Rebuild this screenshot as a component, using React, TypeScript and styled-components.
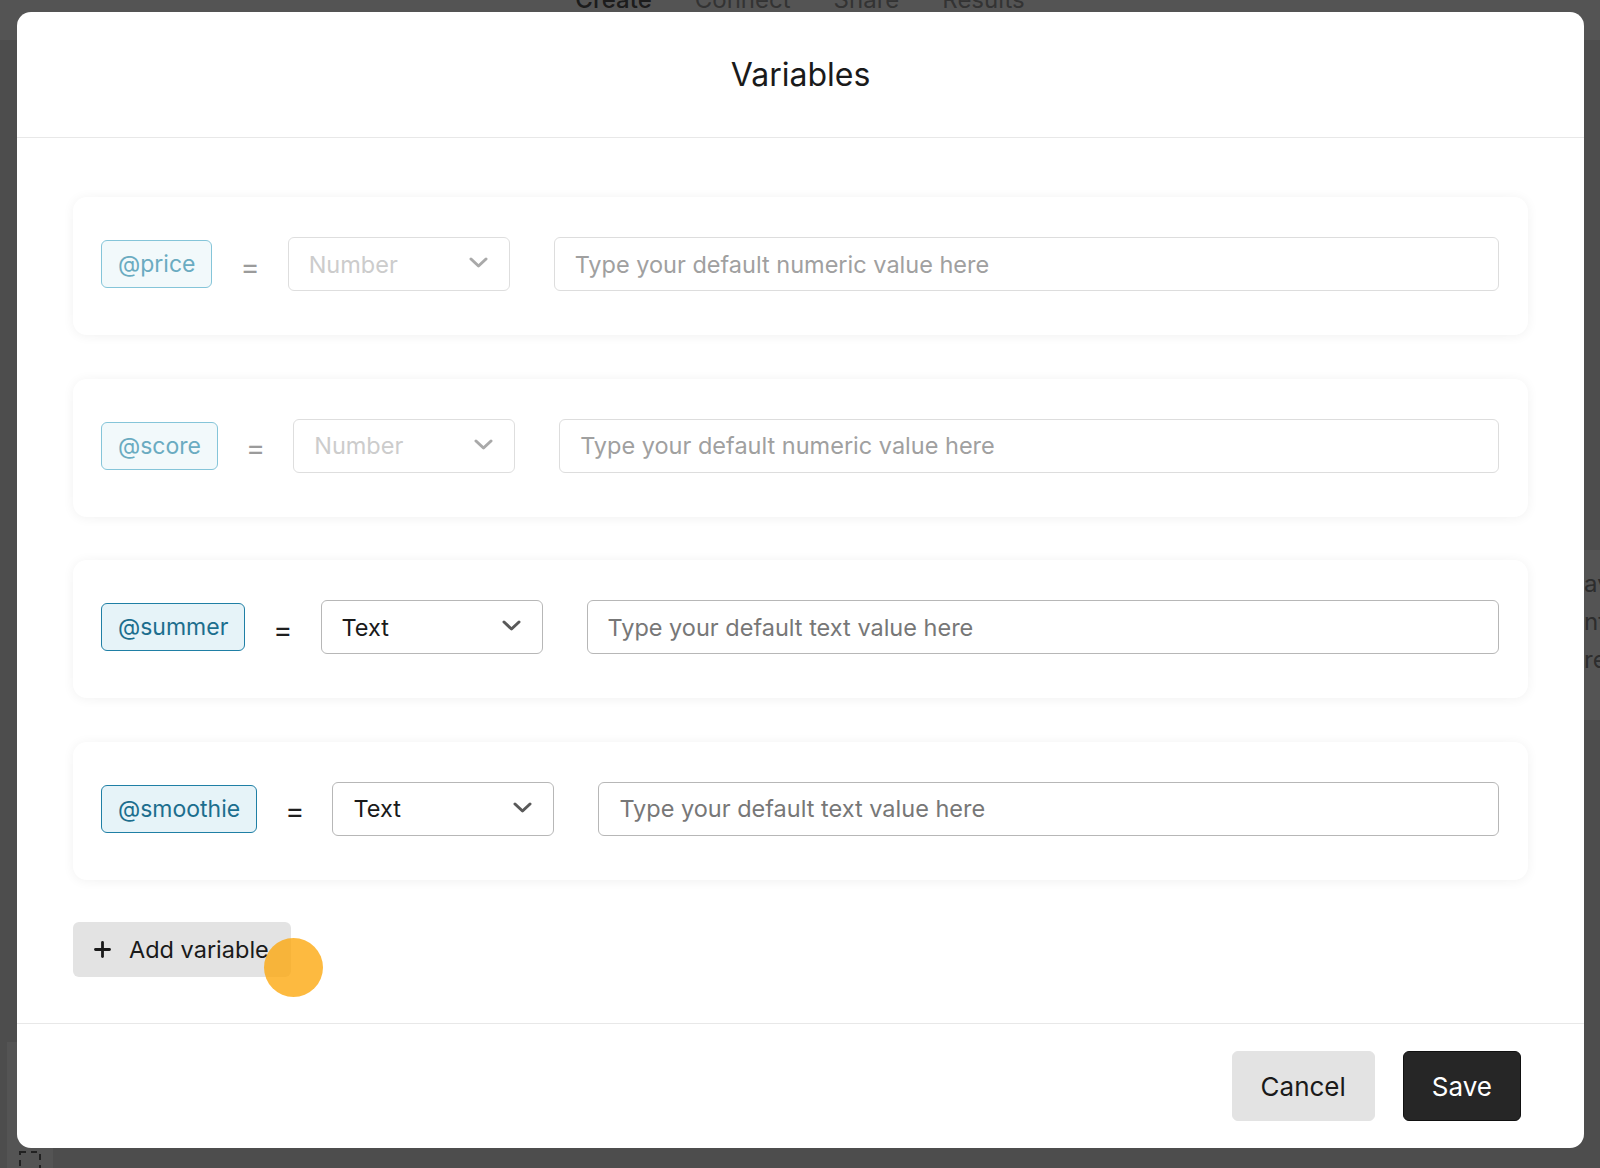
import React from 'react';
import styled, { createGlobalStyle } from 'styled-components';

const GlobalStyle = createGlobalStyle`
  html, body {
    margin: 0;
    padding: 0;
  }
  body {
    font-family: Inter, 'Noto Sans', sans-serif;
    overflow: hidden;
  }
  * {
    box-sizing: border-box;
  }
`;

/* page behind the dialog */

const Page = styled.div`
  position: relative;
  height: 100vh;
  background: #e9e9e9;
  display: flex;
  flex-direction: column;
  overflow: hidden;
`;

const TopNav = styled.nav`
  height: 40px;
  flex-shrink: 0;
  background: #fff;
  display: flex;
  justify-content: center;
  gap: 43px;
  overflow: hidden;
`;

const NavTab = styled.span<{ $active?: boolean }>`
  margin-top: -13px;
  font-size: 24px;
  line-height: 26px;
  color: ${(p) => (p.$active ? '#555' : '#9a9a9a')};
  font-weight: ${(p) => (p.$active ? 500 : 400)};
`;

const Workspace = styled.div`
  flex: 1;
  display: flex;
  justify-content: space-between;
`;

const LeftDock = styled.div`
  align-self: flex-end;
  margin-left: 7px;
  width: 46px;
  height: 126px;
  background: #fff;
  display: flex;
  flex-direction: column;
  justify-content: flex-end;
  padding-left: 12px;
`;

const DockIcon = styled.svg`
  margin-bottom: -5px;
`;

const SidePanel = styled.div`
  margin-top: 510px;
  width: 16px;
  height: 170px;
  padding-top: 15px;
  background: #fff;
  color: #888;
  font-size: 24px;
  line-height: 38px;
  white-space: nowrap;
  overflow: hidden;
`;

/* dialog */

const Overlay = styled.div`
  position: absolute;
  inset: 0;
  background: rgba(0, 0, 0, 0.67);
  display: flex;
  padding: 12px 16px 20px 17px;
`;

const Modal = styled.div`
  flex: 1;
  background: #fff;
  border-radius: 14px;
  display: flex;
  flex-direction: column;
  overflow: hidden;
`;

const ModalHeader = styled.header`
  height: 126px;
  flex-shrink: 0;
  border-bottom: 1px solid #e8e8e8;
  display: flex;
  align-items: center;
  justify-content: center;
`;

const Title = styled.h1`
  margin: 0;
  font-size: 32px;
  font-weight: 400;
  color: #1a1a1a;
`;

const ModalBody = styled.div`
  flex: 1;
  padding: 59px 56px 0;
  display: flex;
  flex-direction: column;
`;

const VariableList = styled.div`
  display: flex;
  flex-direction: column;
  gap: 43.5px;
`;

const VariableCard = styled.div`
  height: 138px;
  padding: 0 29px 4px 28px;
  background: #fff;
  border-radius: 14px;
  box-shadow: 0 1px 12px rgba(0, 0, 0, 0.06);
  display: flex;
  align-items: center;
  gap: 28px;
`;

const VarTag = styled.span<{ $active: boolean }>`
  height: 48px;
  padding: 0 16px;
  display: inline-flex;
  align-items: center;
  border-radius: 6px;
  border: 1.5px solid ${(p) => (p.$active ? '#1f7fa5' : '#85c5d9')};
  background: ${(p) => (p.$active ? '#e6f3f8' : '#f2f9fb')};
  color: ${(p) => (p.$active ? '#1c6e8e' : '#6aabc1')};
  font-size: 23px;
`;

const Equals = styled.span<{ $active: boolean }>`
  font-size: 29px;
  line-height: 1;
  margin-top: 4px;
  color: ${(p) => (p.$active ? '#1f1f1f' : '#9b9b9b')};
`;

const SelectBox = styled.div<{ $active: boolean }>`
  width: 222px;
  height: 54px;
  flex-shrink: 0;
  padding: 0 21px 0 20px;
  display: flex;
  align-items: center;
  justify-content: space-between;
  border-radius: 6px;
  border: 1.5px solid ${(p) => (p.$active ? '#b7b7b7' : '#dedede')};
  color: ${(p) => (p.$active ? '#1a1a1a' : '#cccccc')};
  font-size: 23.5px;

  svg {
    margin-top: -3px;
    stroke: ${(p) => (p.$active ? '#595959' : '#a9a9a9')};
  }
`;

const ValueInput = styled.input<{ $active: boolean }>`
  flex: 1;
  min-width: 0;
  margin-left: 16px;
  height: 54px;
  padding: 0 20px;
  border-radius: 6px;
  border: 1.5px solid ${(p) => (p.$active ? '#b7b7b7' : '#dddddd')};
  background: #fff;
  font-family: inherit;
  font-size: 23.5px;
  outline: none;

  &::placeholder {
    color: ${(p) => (p.$active ? '#777' : '#a0a0a0')};
  }
`;

const AddRow = styled.div`
  position: relative;
  align-self: flex-start;
  margin-top: 42px;
`;

const AddButton = styled.button`
  height: 55px;
  padding: 0 22px 0 21px;
  display: inline-flex;
  align-items: center;
  gap: 18px;
  border: none;
  border-radius: 6px;
  background: #e3e3e3;
  color: #1a1a1a;
  font-family: inherit;
  font-size: 23.5px;
`;

const ClickMarker = styled.span`
  position: absolute;
  left: 191px;
  top: 16px;
  width: 59px;
  height: 59px;
  border-radius: 50%;
  background: rgba(253, 166, 10, 0.78);
  pointer-events: none;
`;

const ModalFooter = styled.footer`
  height: 125px;
  flex-shrink: 0;
  border-top: 1px solid #e8e8e8;
  display: flex;
  align-items: center;
  justify-content: flex-end;
  gap: 28px;
  padding-right: 63px;
`;

const FooterButton = styled.button<{ $primary?: boolean }>`
  height: 70px;
  padding: 0 28px;
  border-radius: 6px;
  border: 1px solid ${(p) => (p.$primary ? '#111' : '#e3e3e3')};
  background: ${(p) => (p.$primary ? '#262626' : '#e3e3e3')};
  color: ${(p) => (p.$primary ? '#fff' : '#1a1a1a')};
  font-family: inherit;
  font-size: 26px;
`;

const variables = [
  { name: 'price', type: 'Number', kind: 'numeric', active: false },
  { name: 'score', type: 'Number', kind: 'numeric', active: false },
  { name: 'summer', type: 'Text', kind: 'text', active: true },
  { name: 'smoothie', type: 'Text', kind: 'text', active: true },
];

const Chevron = () => (
  <svg width="19" height="11" viewBox="0 0 19 11" fill="none" strokeWidth="3" strokeLinecap="round" strokeLinejoin="round">
    <polyline points="2,2 9.5,9 17,2" />
  </svg>
);

const PlusIcon = () => (
  <svg width="17" height="17" viewBox="0 0 17 17" stroke="#1a1a1a" strokeWidth="2.8" strokeLinecap="round">
    <line x1="8.5" y1="1.5" x2="8.5" y2="15.5" />
    <line x1="1.5" y1="8.5" x2="15.5" y2="8.5" />
  </svg>
);

const App = () => {
  return (
    <>
      <GlobalStyle />
      <Page>
        <TopNav>
          <NavTab $active>Create</NavTab>
          <NavTab>Connect</NavTab>
          <NavTab>Share</NavTab>
          <NavTab>Results</NavTab>
        </TopNav>
        <Workspace>
          <LeftDock>
            <DockIcon width="22" height="22" viewBox="0 0 22 22" fill="none">
              <rect x="1" y="1" width="20" height="20" stroke="#666" strokeWidth="2" strokeDasharray="6 5" />
            </DockIcon>
          </LeftDock>
          <SidePanel>
            <div>av</div>
            <div>nt</div>
            <div>re</div>
          </SidePanel>
        </Workspace>

        <Overlay>
          <Modal>
            <ModalHeader>
              <Title>Variables</Title>
            </ModalHeader>
            <ModalBody>
              <VariableList>
                {variables.map((v) => (
                  <VariableCard key={v.name}>
                    <VarTag $active={v.active}>@{v.name}</VarTag>
                    <Equals $active={v.active}>=</Equals>
                    <SelectBox $active={v.active}>
                      <span>{v.type}</span>
                      <Chevron />
                    </SelectBox>
                    <ValueInput
                      $active={v.active}
                      readOnly
                      placeholder={`Type your default ${v.kind} value here`}
                    />
                  </VariableCard>
                ))}
              </VariableList>
              <AddRow>
                <AddButton>
                  <PlusIcon />
                  Add variable
                </AddButton>
                <ClickMarker />
              </AddRow>
            </ModalBody>
            <ModalFooter>
              <FooterButton>Cancel</FooterButton>
              <FooterButton $primary>Save</FooterButton>
            </ModalFooter>
          </Modal>
        </Overlay>
      </Page>
    </>
  );
};

export default App;
